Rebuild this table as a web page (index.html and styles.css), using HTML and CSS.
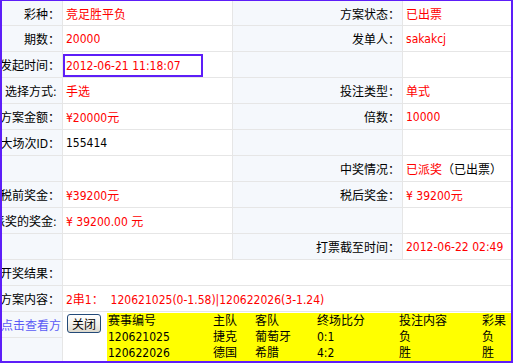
FILE: index.html
```html
<!DOCTYPE html>
<html lang="zh-CN">
<head>
<meta charset="utf-8">
<title>方案详情</title>
<link rel="stylesheet" href="styles.css">
</head>
<body>
<div class="frame">
  <div class="sheet">
    <div class="lab">彩种：</div><div class="val red">竞足胜平负</div><div class="lab">方案状态：</div><div class="val red end">已出票</div>
    <div class="lab">期数：</div><div class="val red">20000</div><div class="lab">发单人：</div><div class="val red end">sakakcj</div>
    <div class="lab">发起时间：</div><div class="val"><span class="datebox red">2012-06-21 11:18:07</span></div><div class="lab"></div><div class="val end"></div>
    <div class="lab">选择方式:&nbsp;</div><div class="val red">手选</div><div class="lab">投注类型：</div><div class="val red end">单式</div>
    <div class="lab">方案金额：</div><div class="val red">¥20000元</div><div class="lab">倍数：</div><div class="val red end">10000</div>
    <div class="lab">大场次ID：</div><div class="val">155414</div><div class="lab"></div><div class="val end"></div>
    <div class="lab"></div><div class="val"></div><div class="lab">中奖情况：</div><div class="val end"><span class="red">已派奖</span>（已出票）</div>
    <div class="lab">税前奖金：</div><div class="val red">¥39200元</div><div class="lab">税后奖金：</div><div class="val red end">¥ 39200元</div>
    <div class="lab">派奖的奖金:&nbsp;</div><div class="val red">¥ 39200.00 元</div><div class="lab"></div><div class="val end"></div>
    <div class="lab"></div><div class="val"></div><div class="lab">打票截至时间：</div><div class="val red end">2012-06-22 02:49</div>
    <div class="lab">开奖结果：</div><div class="val wide"></div>
    <div class="lab">方案内容：</div><div class="val wide red">2串1：&nbsp; 120621025(0-1.58)|120622026(3-1.24)</div>
    <div class="lab-stack"><div class="link-cell">点击查看方</div></div>
    <div class="detail">
      <button class="btn" type="button">关闭</button>
      <div class="picks">
        <span>赛事编号</span><span>主队</span><span>客队</span><span>终场比分</span><span>投注内容</span><span>彩果</span>
        <span>120621025</span><span>捷克</span><span>葡萄牙</span><span>0:1</span><span>负</span><span>负</span>
        <span>120622026</span><span>德国</span><span>希腊</span><span>4:2</span><span>胜</span><span>胜</span>
      </div>
    </div>
  </div>
</div>
</body>
</html>
```

FILE: styles.css
```css
html, body {
  margin: 0;
  padding: 0;
  background: #ffffff;
}

body {
  font-family: "DejaVu Sans Condensed", "Noto Sans", "Noto Sans CJK SC", sans-serif;
  font-size: 12px;
  color: #000000;
}

.frame {
  width: 513px;
  height: 363px;
  box-sizing: border-box;
  border: 2px solid #5d1ef8;
  border-top-width: 1px;
  overflow: hidden;
}

.sheet {
  display: grid;
  grid-template-columns: 61px 170px 170px 108px;
  grid-template-rows: 25px repeat(11, 26px) 49px;
}

.lab,
.val {
  box-sizing: border-box;
  display: flex;
  align-items: center;
  white-space: nowrap;
  border-right: 1px solid #e6e6e6;
  border-bottom: 1px solid #e6e6e6;
}

.lab {
  justify-content: flex-end;
  padding-right: 2px;
  background: #f5f8fc;
}

.val {
  padding-left: 3px;
  background: #ffffff;
  overflow: hidden;
}

.val.end {
  border-right: none;
}

.wide {
  grid-column: span 3;
  border-right: none;
}

.red {
  color: #ff0000;
}

.datebox {
  box-sizing: border-box;
  align-self: flex-end;
  display: flex;
  align-items: center;
  width: 140px;
  height: 23px;
  margin-left: -3px;
  padding-left: 1px;
  border: 2px solid #5d1ef8;
}

.lab-stack {
  background: #f5f8fc;
  border-right: 1px solid #e6e6e6;
}

.link-cell {
  box-sizing: border-box;
  height: 26px;
  display: flex;
  align-items: center;
  justify-content: flex-end;
  padding-right: 1px;
  white-space: nowrap;
  color: #5b5bf5;
  border-bottom: 1px solid #e6e6e6;
}

.detail {
  grid-column: span 3;
  display: flex;
  align-items: flex-start;
  padding: 1px 0 0 4px;
}

.btn {
  box-sizing: border-box;
  width: 34px;
  height: 19px;
  margin: 1px 6px 0 0;
  padding: 0;
  font-family: inherit;
  font-size: 12px;
  color: #000000;
  border: 1px solid #234a78;
  border-radius: 3px;
  background: linear-gradient(#ffffff, #f1efe8 60%, #dcd8cc);
}

.picks {
  box-sizing: border-box;
  display: grid;
  grid-template-columns: 105px 42px 62px 82px 83px 1fr;
  grid-auto-rows: 16px;
  width: 404px;
  padding-left: 1px;
  line-height: 16px;
  white-space: nowrap;
  background: #ffff00;
}
```
